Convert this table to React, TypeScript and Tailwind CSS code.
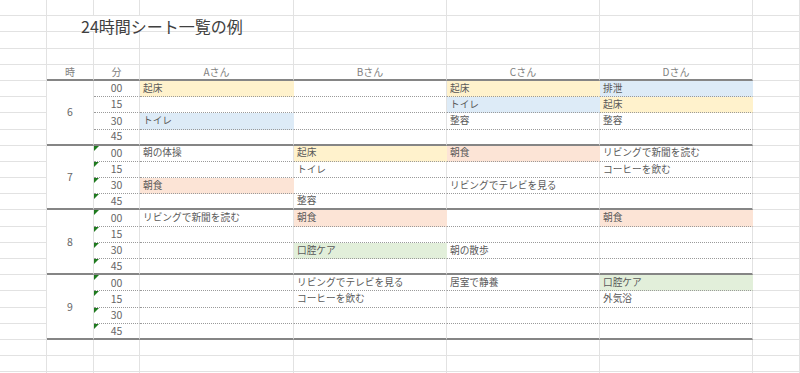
type Fill = 'y' | 'b' | 'p' | 'g' | ''
type Entry = [string, Fill]

const COLS = 'grid grid-cols-[47px_47px_46px_154px_153px_153px_153px_47px]'
const CELL = 'h-[16.2px] border-r border-b border-[#e2e2e2]'

const fillBg: Record<string, string> = {
  y: 'bg-[#fff2cc] border-r-[#fff2cc]',
  b: 'bg-[#ddebf7] border-r-[#ddebf7]',
  p: 'bg-[#fce4d6] border-r-[#fce4d6]',
  g: 'bg-[#e2efda] border-r-[#e2efda]',
  '': 'border-r-[#e2e2e2]',
}

const E: Entry = ['', '']

const blocks: { hour: string; flag: boolean; rows: Entry[][] }[] = [
  {
    hour: '6',
    flag: false,
    rows: [
      [['起床', 'y'], E, ['起床', 'y'], ['排泄', 'b']],
      [E, E, ['トイレ', 'b'], ['起床', 'y']],
      [['トイレ', 'b'], E, ['整容', ''], ['整容', '']],
      [E, E, E, E],
    ],
  },
  {
    hour: '7',
    flag: true,
    rows: [
      [['朝の体操', ''], ['起床', 'y'], ['朝食', 'p'], ['リビングで新聞を読む', '']],
      [E, ['トイレ', ''], E, ['コーヒーを飲む', '']],
      [['朝食', 'p'], E, ['リビングでテレビを見る', ''], E],
      [E, ['整容', ''], E, E],
    ],
  },
  {
    hour: '8',
    flag: true,
    rows: [
      [['リビングで新聞を読む', ''], ['朝食', 'p'], E, ['朝食', 'p']],
      [E, E, E, E],
      [E, ['口腔ケア', 'g'], ['朝の散歩', ''], E],
      [E, E, E, E],
    ],
  },
  {
    hour: '9',
    flag: true,
    rows: [
      [E, ['リビングでテレビを見る', ''], ['居室で静養', ''], ['口腔ケア', 'g']],
      [E, ['コーヒーを飲む', ''], E, ['外気浴', '']],
      [E, E, E, E],
      [E, E, E, E],
    ],
  },
]

const mins = ['00', '15', '30', '45']

function EmptyRow() {
  return (
    <div className={COLS}>
      {Array.from({ length: 8 }).map((_, i) => (
        <div key={i} className={CELL} />
      ))}
    </div>
  )
}

function Block({ hour, flag, rows }: { hour: string; flag: boolean; rows: Entry[][] }) {
  return (
    <div className={`${COLS} grid-rows-[repeat(4,16.2px)]`}>
      {rows.map((row, i) => {
        const last = i === 3
        const bottom = last
          ? 'border-b-2 border-b-[#858585]'
          : 'border-b [border-bottom-style:dotted] border-b-[#9a9a9a]'
        return [
          <div key={`c1-${i}`} className={CELL} />,
          i === 0 && (
            <div
              key="hour"
              className="row-span-4 flex items-center justify-center border-r border-[#e2e2e2] border-b-2 border-b-[#858585] text-[10.5px] text-[#666]"
            >
              {hour}
            </div>
          ),
          <div
            key={`m-${i}`}
            className={`relative flex h-[16.2px] items-center justify-center border-r border-[#e2e2e2] text-[10.5px] leading-none text-[#666] ${bottom}`}
          >
            {flag && (
              <span className="absolute left-0 top-0 h-0 w-0 border-t-[5px] border-r-[5px] border-t-[#1f7a1f] border-r-transparent" />
            )}
            {mins[i]}
          </div>,
          ...row.map(([text, fill], j) => (
            <div
              key={`p-${i}-${j}`}
              className={`flex h-[16.2px] items-center overflow-visible whitespace-nowrap border-r pl-[3px] text-[9.7px] leading-none text-[#595959] ${fillBg[fill]} ${bottom}`}
            >
              {text}
            </div>
          )),
          <div key={`c8-${i}`} className={CELL} />,
        ]
      })}
    </div>
  )
}

export default function App() {
  return (
    <div
      className="h-[373px] w-[800px] overflow-hidden bg-white"
      style={{ fontFamily: '"Noto Sans CJK JP", "Noto Sans", sans-serif' }}
    >
      <EmptyRow />

      {/* title row */}
      <div className={COLS}>
        <div className={CELL} />
        <div className="col-span-3 flex h-[16.2px] items-end border-r border-b border-[#e2e2e2] pl-[34px]">
          <span className="translate-y-[3px] whitespace-nowrap text-[16px] leading-[16px] text-[#404040]">
            24時間シート一覧の例
          </span>
        </div>
        {Array.from({ length: 4 }).map((_, i) => (
          <div key={i} className={CELL} />
        ))}
      </div>

      <EmptyRow />
      <EmptyRow />

      {/* header */}
      <div className={COLS}>
        <div className={CELL} />
        {['時', '分', 'Aさん', 'Bさん', 'Cさん', 'Dさん'].map((h) => (
          <div
            key={h}
            className="flex h-[16.2px] items-center justify-center border-r border-[#e2e2e2] border-b-2 border-b-[#858585] text-[10px] leading-none text-[#7f7f7f]"
          >
            {h}
          </div>
        ))}
        <div className={CELL} />
      </div>

      {blocks.map((b) => (
        <Block key={b.hour} {...b} />
      ))}

      <EmptyRow />
      <EmptyRow />
      <EmptyRow />
    </div>
  )
}
